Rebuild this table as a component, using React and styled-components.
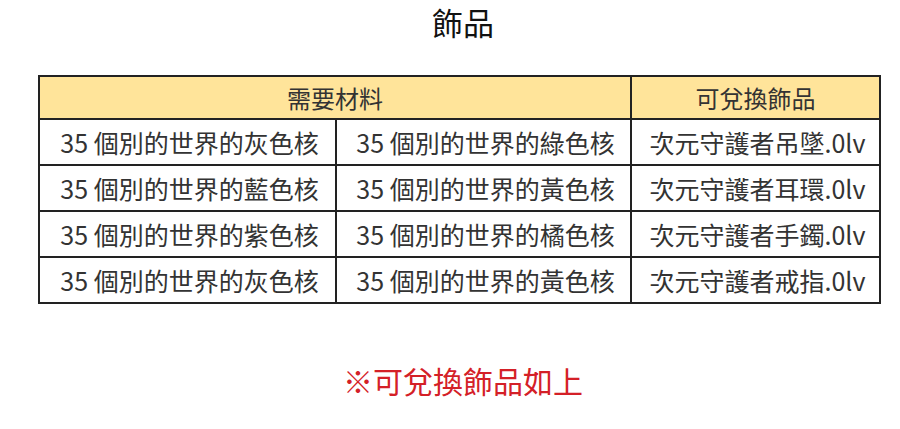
import React from "react";
import styled, { createGlobalStyle } from "styled-components";

const Global = createGlobalStyle`
  html, body { margin: 0; padding: 0; background: #fff; }
  body { font-family: "Noto Sans CJK TC", "Noto Sans", sans-serif; }
`;

const Page = styled.div`
  width: 900px;
  height: 429px;
  display: flex;
  flex-direction: column;
  align-items: flex-start;
  box-sizing: border-box;
  padding-left: 38px;
`;

const Title = styled.h1`
  width: 850px;
  margin: 0;
  height: 75px;
  box-sizing: border-box;
  text-align: center;
  font-size: 31px;
  font-weight: 400;
  line-height: 44px;
  color: #111;
`;

const Table = styled.table`
  width: 841px;
  border-collapse: collapse;
  table-layout: fixed;
  border: 2px solid #222;
`;

const HeadCell = styled.th`
  background: #ffe49a;
  border: 2px solid #222;
  height: 41px;
  padding: 0;
  font-size: 24px;
  font-weight: 400;
  color: #333;
  text-align: center;
  line-height: 1;
`;

const Cell = styled.td`
  border: 2px solid #222;
  height: 44px;
  padding: 0 0 0 4px;
  font-size: 25px;
  color: #333;
  text-align: center;
  white-space: nowrap;
  line-height: 1;
`;

const Note = styled.p`
  width: 850px;
  margin: 56px 0 0 0;
  text-align: center;
  font-size: 30px;
  line-height: 40px;
  color: #d42027;
`;

const rows = [
  ["35 個別的世界的灰色核", "35 個別的世界的綠色核", "次元守護者吊墜.0lv"],
  ["35 個別的世界的藍色核", "35 個別的世界的黃色核", "次元守護者耳環.0lv"],
  ["35 個別的世界的紫色核", "35 個別的世界的橘色核", "次元守護者手鐲.0lv"],
  ["35 個別的世界的灰色核", "35 個別的世界的黃色核", "次元守護者戒指.0lv"],
];

export default function App() {
  return (
    <>
      <Global />
      <Page>
        <Title>飾品</Title>
        <Table>
          <colgroup>
            <col style={{ width: 297 }} />
            <col style={{ width: 295 }} />
            <col style={{ width: 249 }} />
          </colgroup>
          <thead>
            <tr>
              <HeadCell colSpan={2}>需要材料</HeadCell>
              <HeadCell>可兌換飾品</HeadCell>
            </tr>
          </thead>
          <tbody>
            {rows.map((r, i) => (
              <tr key={i}>
                {r.map((c, j) => (
                  <Cell key={j}>{c}</Cell>
                ))}
              </tr>
            ))}
          </tbody>
        </Table>
        <Note>※可兌換飾品如上</Note>
      </Page>
    </>
  );
}
